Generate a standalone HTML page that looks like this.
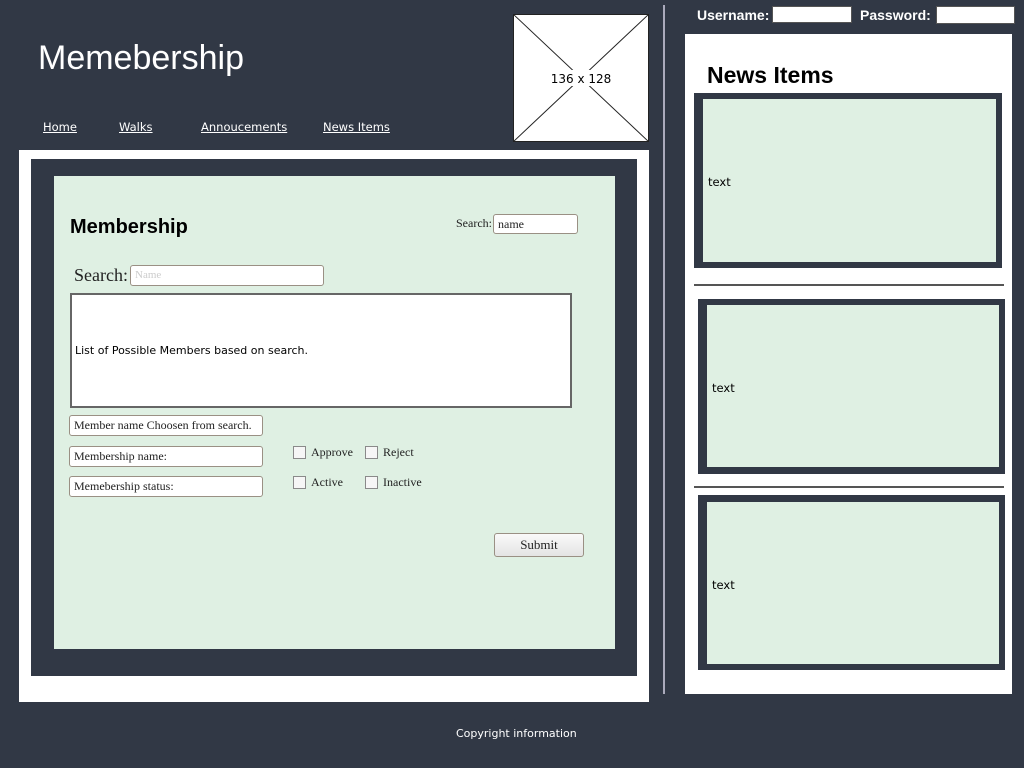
<!DOCTYPE html>
<html><head><style>
body{margin:0;width:1024px;height:768px;background:#313845;position:relative;overflow:hidden;font-family:"Liberation Sans",sans-serif}
.a{position:absolute}
.nav{color:#fff;text-decoration:underline;top:120px;font-family:"DejaVu Sans",sans-serif;font-size:11.5px}
.inp{position:absolute;background:#fff;border:1px solid #9a9084;border-radius:3px;box-sizing:border-box;font-family:"Liberation Serif",serif;font-size:12px;padding:3px 4px;line-height:12px;color:#222}
.cb{position:absolute;width:11px;height:11px;border:1px solid #8a8a8a;background:#f6f6f6}
.lb{position:absolute;font-family:"Liberation Serif",serif;font-size:12px;color:#222}
.dk{position:absolute;background:#313845}
.gr{position:absolute;background:#dff0e3}
.tx{position:absolute;font-family:"DejaVu Sans",sans-serif;font-size:11.5px;color:#000}
</style></head><body>
<div class="a" style="left:38px;top:39px;color:#fff;font-size:34px">Memebership</div>
<div class="a nav" style="left:43px">Home</div>
<div class="a nav" style="left:119px">Walks</div>
<div class="a nav" style="left:201px">Annoucements</div>
<div class="a nav" style="left:323px">News Items</div>
<svg class="a" style="left:513px;top:14px" width="136" height="128"><rect x="0.5" y="0.5" width="135" height="127" fill="#fff" stroke="#222"/><line x1="0" y1="0" x2="136" y2="128" stroke="#222"/><line x1="136" y1="0" x2="0" y2="128" stroke="#222"/><rect x="40" y="56" width="56" height="16" fill="#fff"/><text x="68" y="69" font-size="12" text-anchor="middle" font-family="DejaVu Sans">136 x 128</text></svg>
<div class="a" style="left:19px;top:150px;width:630px;height:552px;background:#fff"></div>
<div class="dk" style="left:31px;top:159px;width:606px;height:517px"></div>
<div class="gr" style="left:54px;top:176px;width:561px;height:473px"></div>
<div class="a" style="left:70px;top:216px;font-size:20px;font-weight:bold">Membership</div>
<div class="lb" style="left:456px;top:216px">Search:</div>
<div class="inp" style="left:493px;top:214px;width:85px;height:20px">name</div>
<div class="lb" style="left:74px;top:265px;font-size:18px">Search:</div>
<div class="inp" style="left:130px;top:265px;width:194px;height:21px;color:#ccc;font-size:11px">Name</div>
<div class="a" style="left:70px;top:293px;width:498px;height:111px;background:#fff;border:2px solid #666"></div>
<div class="tx" style="left:75px;top:344px;font-size:11px">List of Possible Members based on search.</div>
<div class="inp" style="left:69px;top:415px;width:194px;height:21px">Member name Choosen from search.</div>
<div class="inp" style="left:69px;top:446px;width:194px;height:21px">Membership name:</div>
<div class="inp" style="left:69px;top:476px;width:194px;height:21px">Memebership status:</div>
<div class="cb" style="left:293px;top:446px"></div><div class="lb" style="left:311px;top:445px">Approve</div>
<div class="cb" style="left:365px;top:446px"></div><div class="lb" style="left:383px;top:445px">Reject</div>
<div class="cb" style="left:293px;top:476px"></div><div class="lb" style="left:311px;top:475px">Active</div>
<div class="cb" style="left:365px;top:476px"></div><div class="lb" style="left:383px;top:475px">Inactive</div>
<div class="inp" style="left:494px;top:533px;width:90px;height:24px;background:linear-gradient(#fafafa,#e4e4e4);text-align:center;padding-top:5px;font-size:13px">Submit</div>
<div class="a" style="left:663px;top:5px;width:2px;height:689px;background:#aab"></div>
<div class="a" style="left:697px;top:7px;color:#fff;font-weight:bold;font-size:14px">Username:</div>
<div class="a" style="left:772px;top:6px;width:80px;height:17px;background:#fff;border:1px solid #555;box-sizing:border-box"></div>
<div class="a" style="left:860px;top:7px;color:#fff;font-weight:bold;font-size:14px">Password:</div>
<div class="a" style="left:936px;top:6px;width:79px;height:18px;background:#fff;border:1px solid #555;box-sizing:border-box"></div>
<div class="a" style="left:685px;top:34px;width:327px;height:660px;background:#fff"></div>
<div class="a" style="left:707px;top:62px;font-size:23px;font-weight:bold">News Items</div>
<div class="dk" style="left:694px;top:93px;width:308px;height:175px"></div>
<div class="gr" style="left:703px;top:99px;width:293px;height:163px"></div>
<div class="tx" style="left:708px;top:175px">text</div>
<div class="a" style="left:694px;top:284px;width:310px;height:2px;background:#555"></div>
<div class="dk" style="left:698px;top:299px;width:307px;height:175px"></div>
<div class="gr" style="left:707px;top:305px;width:292px;height:162px"></div>
<div class="tx" style="left:712px;top:381px">text</div>
<div class="a" style="left:694px;top:486px;width:310px;height:2px;background:#555"></div>
<div class="dk" style="left:698px;top:495px;width:307px;height:175px"></div>
<div class="gr" style="left:707px;top:502px;width:292px;height:162px"></div>
<div class="tx" style="left:712px;top:578px">text</div>
<div class="a" style="left:456px;top:727px;color:#fff;font-family:'DejaVu Sans',sans-serif;font-size:11px">Copyright information</div>
</body></html>
